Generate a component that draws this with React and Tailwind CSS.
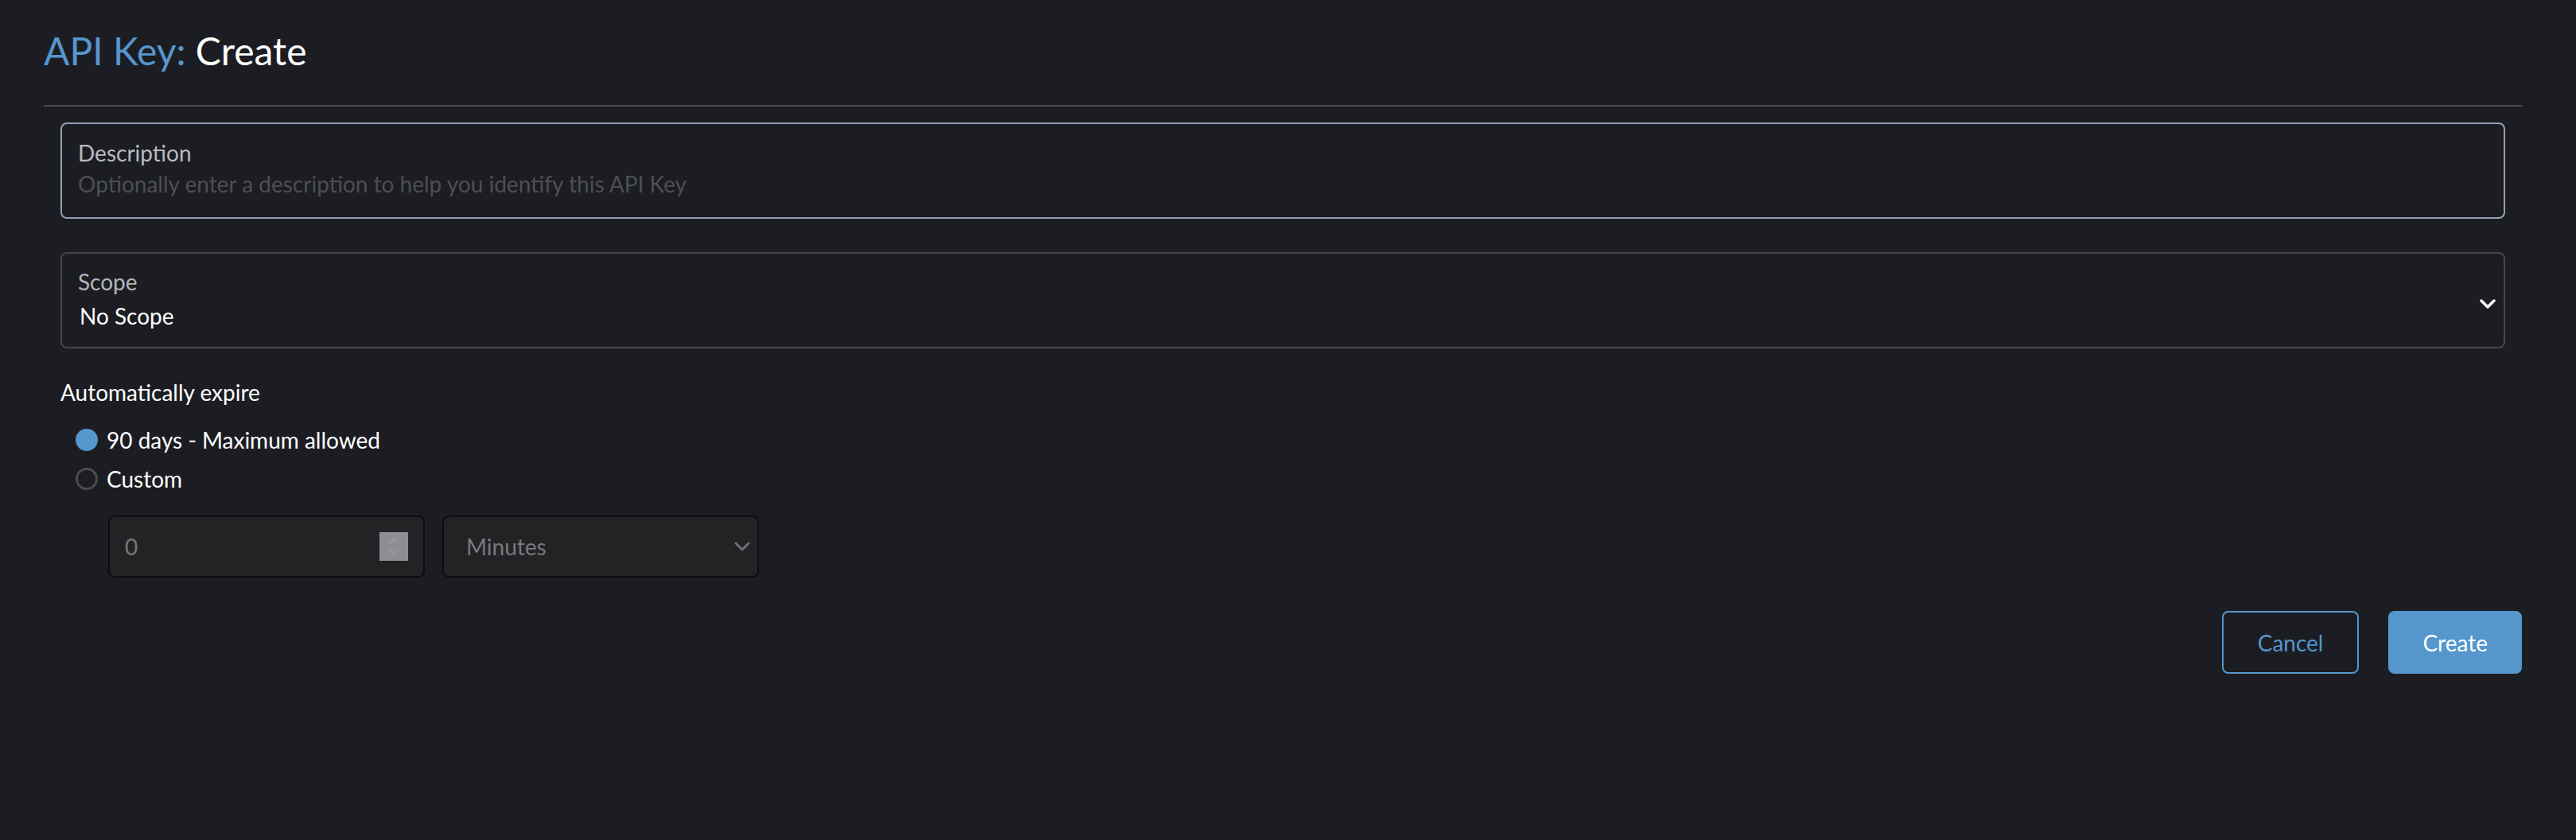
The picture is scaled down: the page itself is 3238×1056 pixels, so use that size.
import React, { useState } from 'react';

const Chevron = ({ color = '#ffffff', width = 3.5 }) => (
  <svg width="20" height="12" viewBox="0 0 20 12" fill="none">
    <path d="M2 2 L10 10 L18 2" stroke={color} strokeWidth={width} strokeLinecap="round" strokeLinejoin="round" />
  </svg>
);

const Radio = ({ checked, label, onClick }) => (
  <div className="flex items-center h-[34px] ml-[19px] cursor-pointer" onClick={onClick}>
    {checked ? (
      <span className="w-[28px] h-[28px] rounded-full bg-[#5596cd]" />
    ) : (
      <span className="w-[28px] h-[28px] rounded-full border-[3px] border-[#4b4c51]" />
    )}
    <span className="ml-[11px] text-[28px] leading-[34px] text-white">{label}</span>
  </div>
);

export default function App() {
  const [expire, setExpire] = useState('90');
  const [description, setDescription] = useState('');

  return (
    <div className="min-h-screen bg-[#1c1d22] font-['Lato',sans-serif] pl-[55px] pr-[68px] pt-[35px]">
      <h1 className="text-[48px] leading-[58px] font-normal">
        <span className="text-[#5596cd]">API Key:</span> <span className="text-white">Create</span>
      </h1>
      <div className="mt-[39px] h-[2px] bg-[#4a4b50]" />

      <div className="px-[21px] pt-[20px]">
        {/* Description */}
        <div className="rounded-[8px] border-2 border-[#979db3] px-[20px] pt-[19px] pb-[25px]">
          <div className="text-[28px] leading-[34px] text-[#b9bac4]">Description</div>
          <input
            className="mt-[5px] block w-full h-[34px] bg-transparent text-[28px] leading-[34px] text-white outline-none placeholder:text-[#4d4e55]"
            placeholder="Optionally enter a description to help you identify this API Key"
            value={description}
            onChange={e => setDescription(e.target.value)}
          />
        </div>

        {/* Scope */}
        <div className="mt-[42px] flex rounded-[8px] border-2 border-[#45464c] pl-[20px] pr-[10px] pt-[18px] pb-[22px]">
          <div className="flex-1">
            <div className="text-[28px] leading-[34px] text-[#b4b5bd]">Scope</div>
            <div className="mt-[9px] pl-[2px] text-[28px] leading-[34px] text-white">No Scope</div>
          </div>
          <div className="mt-[39px]">
            <Chevron />
          </div>
        </div>

        {/* Expiry */}
        <div className="mt-[38px] text-[28px] leading-[34px] text-white">Automatically expire</div>
        <div className="mt-[26px] flex flex-col gap-[15px]">
          <Radio checked={expire === '90'} label="90 days - Maximum allowed" onClick={() => setExpire('90')} />
          <Radio checked={expire === 'custom'} label="Custom" onClick={() => setExpire('custom')} />
        </div>

        <div className="mt-[29px] ml-[60px] flex gap-[22px]">
          <div className="w-[398px] h-[78px] rounded-[8px] border-2 border-[#0d0d0f] bg-[#232326] flex items-center pl-[19px] pr-[19px]">
            <input
              readOnly
              value="0"
              className="flex-1 min-w-0 bg-transparent text-[28px] leading-[34px] text-[#77777b] outline-none"
            />
            <span className="w-[36px] h-[36px] bg-[#8e8d93] flex items-center justify-center">
              <svg width="14" height="26" viewBox="0 0 14 26" fill="none">
                <path d="M2 9 L7 3 L12 9" stroke="#99989f" strokeWidth="2" strokeLinecap="round" strokeLinejoin="round" />
                <path d="M2 17 L7 23 L12 17" stroke="#99989f" strokeWidth="2" strokeLinecap="round" strokeLinejoin="round" />
              </svg>
            </span>
          </div>
          <div className="w-[398px] h-[78px] rounded-[8px] border-2 border-[#0d0d0f] bg-[#232326] flex items-center pl-[28px] pr-[9px]">
            <span className="flex-1 text-[28px] leading-[34px] text-[#7a7a7e]">Minutes</span>
            <Chevron color="#6f6f75" width={3} />
          </div>
        </div>
      </div>

      {/* Actions */}
      <div className="mt-[42px] flex justify-end gap-[37px]">
        <button className="h-[79px] px-[43px] rounded-[8px] border-2 border-[#5596cd] text-[28px] text-[#5596cd]">
          Cancel
        </button>
        <button className="h-[79px] px-[43px] rounded-[8px] bg-[#5596cd] text-[28px] text-white">
          Create
        </button>
      </div>
    </div>
  );
}
